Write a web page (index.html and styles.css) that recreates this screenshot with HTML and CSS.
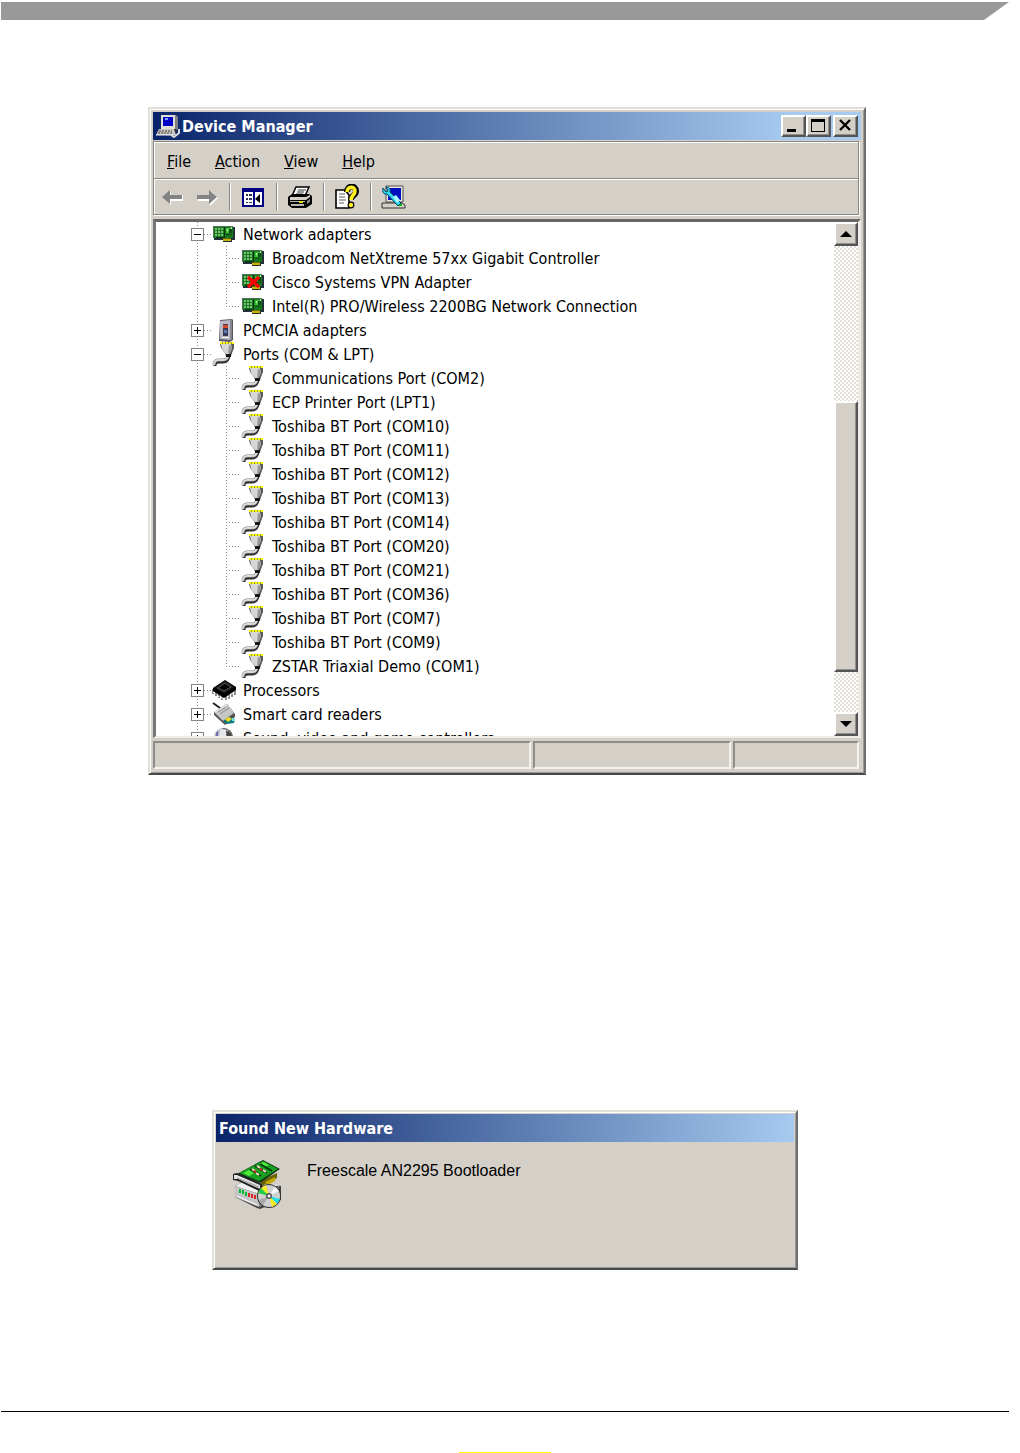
FILE: index.html
```html
<!DOCTYPE html>
<html lang="en">
<head>
  <meta charset="UTF-8" />
  <title>Device Manager</title>
  <link rel="stylesheet" href="styles.css">
</head>
<body>
  <svg class="defs" aria-hidden="true">
    <symbol id="net" viewBox="0 0 24 24">
      <path d="M2 5h21v13h-3v2h-9v-2H2z" fill="#22303c"/>
      <path d="M1 4h20v12H1z" fill="#147a1c"/>
      <path d="M1 4h20v1H1zM1 4h1v12H1z" fill="#4f6f58"/>
      <path d="M3 6h2v2H3zM6 6h2v2H6zM9 6h2v2H9zM3 9h2v2H3zM6 9h2v2H6zM9 9h2v2H9zM3 12h2v2H3zM6 12h2v2H6zM9 12h2v2H9z" fill="#7cc07c"/>
      <path d="M12 5h1v10h-1zM4 15h9v1H4z" fill="#07360c"/>
      <path d="M14 6h5v5h-5z" fill="#3fc33f"/>
      <path d="M17 7h3v4h-3zM14 12h6v1h-6z" fill="#0b4d12"/>
      <path d="M19 5h1v2h-1zM15 7h1v2h-1z" fill="#c8f0a8"/>
      <path d="M11 16h8v3h-8z" fill="#c4b400"/>
      <path d="M11 16h8v1h-8z" fill="#6f6a18"/>
    </symbol>
    <symbol id="port" viewBox="0 0 24 24">
      <path d="M17 12c0 5-2 8-6 8H7c-3 0-4 1-4 4" fill="none" stroke="#303030" stroke-width="3"/>
      <path d="M16 12c0 4-2 6-5 6H6c-3 0-4 2-4 5" fill="none" stroke="#888888" stroke-width="3"/>
      <path d="M16 12c0 4-2 6-5 6H6c-3 0-4 2-4 5" fill="none" stroke="#d8d8d8" stroke-width="2"/>
      <path d="M8 2h14v4l-2 5-1 3h-5l-1-3-4-5z" fill="#585858"/>
      <path d="M9 2h10v6l-2 4h-3l-4-5z" fill="#d6d6d6"/>
      <path d="M17 3h3v4l-2 4h-2z" fill="#9a9a9a"/>
      <path d="M14 12h5v3h-5z" fill="#181818"/>
      <path d="M8 1h14" stroke="#8c8c50" stroke-width="2"/>
      <path d="M8 1h14" stroke="#ffff00" stroke-width="2" stroke-dasharray="2 1"/>
    </symbol>
    <symbol id="pcmcia" viewBox="0 0 24 24">
      <path d="M8 2l12-1 1 1v20l-3 2-11-1z" fill="#55555f"/>
      <path d="M8 3l10-1v20l-10-1z" fill="#b9b9c6"/>
      <path d="M18 2l2-1v20l-2 2z" fill="#85858f"/>
      <path d="M11 6h5v12h-5z" fill="#363a52"/>
      <path d="M11 7h5v3h-5z" fill="#d8492c"/>
      <path d="M12 12h3v3h-3z" fill="#6078b8"/>
      <path d="M10 19h7v1h-7z" fill="#f2f2f2"/>
    </symbol>
    <symbol id="cpu" viewBox="0 0 24 24">
      <path d="M1 11v5M4 12v6M7 14v6M10 16v6M14 17v5M17 15v6M20 13v6M23 11v6" stroke="#8c8c8c" stroke-width="2"/>
      <path d="M13 2l11 7v3l-12 8-11-7v-3z" fill="#000"/>
      <path d="M13 3l9 6-10 6-9-5z" fill="#202020"/>
      <path d="M13 5l6 4-7 4-6-3z" fill="#050505" stroke="#555"/>
      <path d="M1 14l2 2M5 17l2 2M9 19l2 2M15 19l2-1M19 16l2-1" stroke="#eee"/>
    </symbol>
    <symbol id="card" viewBox="0 0 24 24">
      <path d="M1 1l7 5" stroke="#222" stroke-width="2"/>
      <path d="M2 10l13-8 8 10v3l-10 8L2 13z" fill="#555"/>
      <path d="M2 10l13-8 7 9-11 8z" fill="#c6c6c6"/>
      <path d="M6 10l8-5M8 12l9-6" stroke="#8d8d8d"/>
      <path d="M3 10l12-7" stroke="#f4f4f4"/>
      <path d="M11 19l6-4 6 2-1 4-7 1z" fill="#107c80"/>
      <path d="M13 17l4-2 3 2-4 3z" fill="#f0dc20"/>
      <path d="M20 16l3 1v2h-3z" fill="#7de4e8"/>
    </symbol>
    <symbol id="sound" viewBox="0 0 24 24">
      <circle cx="12" cy="11" r="9" fill="#666"/>
      <circle cx="10" cy="11" r="8" fill="#b8b8c6"/>
      <path d="M8 3l8 1-3 8h-6z" fill="#e6e6ec"/>
      <path d="M14 4l5 4v8h-4z" fill="#454545"/>
      <path d="M4 7l2-2v12l-2-2z" fill="#6c6cae"/>
    </symbol>
  </svg>

  <header class="page-bar"></header>

  <main>
    <section class="window device-manager">
      <div class="title-bar">
        <svg class="title-icon" viewBox="0 0 24 24" aria-hidden="true">
          <path d="M6 1h14l2 2v12l-2 1H6z" fill="#808080"/>
          <path d="M5 1h14v14H5z" fill="#e0ddd6"/>
          <path d="M7 3h10v9H7z" fill="#0000c8"/>
          <path d="M9 4h3v2H9z" fill="#7f9cff"/>
          <path d="M4 15h16l1 3H3z" fill="#303030"/>
          <path d="M3 15h15l2 6H0z" fill="#c9c6bf"/>
          <path d="M3 17h13M2 19h14" stroke="#404040" stroke-dasharray="2 1"/>
          <path d="M0 21h18" stroke="#f8f8f8"/>
          <path d="M23 15v4l-5 4-3-2" fill="none" stroke="#d8d8d8" stroke-width="2"/>
        </svg>
        <h1>Device Manager</h1>
        <div class="title-buttons">
          <button aria-label="Minimize"><svg viewBox="0 0 20 18"><path d="M4 12h9v3H4z"/></svg></button>
          <button aria-label="Maximize"><svg viewBox="0 0 20 18"><path d="M3 2h14v13H3zM4 5v9h12V5z" fill-rule="evenodd"/></svg></button>
          <button class="close" aria-label="Close"><svg viewBox="0 0 20 18"><path d="M5 3l10 10M15 3L5 13" fill="none" stroke="#000" stroke-width="2.4"/></svg></button>
        </div>
      </div>

      <div class="bars">
        <nav class="menu-bar">
          <button><u>F</u>ile</button>
          <button><u>A</u>ction</button>
          <button><u>V</u>iew</button>
          <button><u>H</u>elp</button>
        </nav>
        <div class="toolbar">
          <button aria-label="Back"><svg viewBox="0 0 26 26"><path d="M5 14l7-7v4h12v6H12v4z" fill="#fff"/><path d="M3 13l8-7v5h12v4H11v5z" fill="#848484"/></svg></button>
          <button aria-label="Forward"><svg viewBox="0 0 26 26"><path d="M25 14l-7-7v4H5v6h12v5z" fill="#fff"/><path d="M24 13l-8-7v5H4v4h12v5z" fill="#848484"/></svg></button>
          <span class="sep"></span>
          <button aria-label="Show/Hide Console Tree">
            <svg viewBox="0 0 26 26">
              <path d="M2 4h22v19H2z" fill="#000080"/>
              <path d="M4 8h9v13H4zM15 8h7v13h-7z" fill="#fff"/>
              <path d="M6 10h2v2H6zM6 14h2v2H6zM6 18h2v1H6zM9 10h3v2H9zM9 14h3v2H9zM9 18h3v1H9z" fill="#303060"/>
              <path d="M20 10v9l-5-4z" fill="#000"/>
            </svg>
          </button>
          <span class="sep"></span>
          <button aria-label="Print">
            <svg viewBox="0 0 26 26">
              <path d="M9 3h13l-4 9H5z" fill="#fff" stroke="#000" stroke-width="1.5"/>
              <path d="M11 6h8M10 8h7M9 10h7" stroke="#333"/>
              <path d="M1 13l4-3h17l3 2v8l-6 4H5l-4-3z" fill="#000"/>
              <path d="M3 13h16l4-2v2l-4 3H3z" fill="#d4d0c8"/>
              <path d="M3 17h15v1H3zM4 20h13v2H4z" fill="#b8b4ac"/>
              <path d="M20 17l3-2v3l-3 2z" fill="#8a8a8a"/>
              <path d="M12 17h4v2h-4z" fill="#e8e000"/>
            </svg>
          </button>
          <span class="sep"></span>
          <button aria-label="Help">
            <svg viewBox="0 0 26 26">
              <path d="M2 6h9l4 5v13H2z" fill="#fff" stroke="#000" stroke-width="1.6"/>
              <path d="M5 10h6M5 13h6M5 16h7M5 19h5" stroke="#606060"/>
              <path d="M13 8c0-7 9-7 9-1 0 5-5 4-5 9" fill="none" stroke="#000" stroke-width="6"/>
              <path d="M13 8c0-6 8-6 8-1 0 4-4 4-4 9" fill="none" stroke="#ffee20" stroke-width="3.6"/>
              <circle cx="17" cy="21" r="3.4" fill="#000"/>
              <circle cx="17" cy="21" r="2.2" fill="#ffee20"/>
            </svg>
          </button>
          <span class="sep"></span>
          <button aria-label="Scan for hardware changes">
            <svg viewBox="0 0 26 26">
              <path d="M5 2h17v16H5z" fill="#e8e6e0" stroke="#505050"/>
              <path d="M7 4h13v12H7z" fill="#0010c0"/>
              <path d="M1 19h20l3 2v3H1z" fill="#d4d0c8" stroke="#303030"/>
              <path d="M17 20h4v2h-4z" fill="#00c000"/>
              <path d="M2 4c-1 4 1 7 4 6l11 12 3-3L9 8c1-3-1-5-4-5l2 4-2 1z" fill="#30d8f0" stroke="#004060"/>
              <path d="M12 13l3-2 4 5-3 3z" fill="#a8f8ff"/>
            </svg>
          </button>
        </div>
      </div>

      <div class="view">
        <ul class="tree">
          <li>
            <div class="row"><button class="box minus" aria-label="Collapse"></button><i class="dots"></i><svg class="icon"><use href="#net"/></svg><span>Network adapters</span></div>
            <ul>
              <li class="row"><i class="dots"></i><svg class="icon"><use href="#net"/></svg><span>Broadcom NetXtreme 57xx Gigabit Controller</span></li>
              <li class="row"><i class="dots"></i><svg class="icon" viewBox="0 0 24 24"><use href="#net"/><path d="M7 7l11 10M18 7L7 17" stroke="#f00" stroke-width="3.4"/></svg><span>Cisco Systems VPN Adapter</span></li>
              <li class="row"><i class="dots"></i><svg class="icon"><use href="#net"/></svg><span>Intel(R) PRO/Wireless 2200BG Network Connection</span></li>
            </ul>
          </li>
          <li>
            <div class="row"><button class="box plus" aria-label="Expand"></button><i class="dots"></i><svg class="icon"><use href="#pcmcia"/></svg><span>PCMCIA adapters</span></div>
          </li>
          <li>
            <div class="row"><button class="box minus" aria-label="Collapse"></button><i class="dots"></i><svg class="icon"><use href="#port"/></svg><span>Ports (COM &amp; LPT)</span></div>
            <ul>
              <li class="row"><i class="dots"></i><svg class="icon"><use href="#port"/></svg><span>Communications Port (COM2)</span></li>
              <li class="row"><i class="dots"></i><svg class="icon"><use href="#port"/></svg><span>ECP Printer Port (LPT1)</span></li>
              <li class="row"><i class="dots"></i><svg class="icon"><use href="#port"/></svg><span>Toshiba BT Port (COM10)</span></li>
              <li class="row"><i class="dots"></i><svg class="icon"><use href="#port"/></svg><span>Toshiba BT Port (COM11)</span></li>
              <li class="row"><i class="dots"></i><svg class="icon"><use href="#port"/></svg><span>Toshiba BT Port (COM12)</span></li>
              <li class="row"><i class="dots"></i><svg class="icon"><use href="#port"/></svg><span>Toshiba BT Port (COM13)</span></li>
              <li class="row"><i class="dots"></i><svg class="icon"><use href="#port"/></svg><span>Toshiba BT Port (COM14)</span></li>
              <li class="row"><i class="dots"></i><svg class="icon"><use href="#port"/></svg><span>Toshiba BT Port (COM20)</span></li>
              <li class="row"><i class="dots"></i><svg class="icon"><use href="#port"/></svg><span>Toshiba BT Port (COM21)</span></li>
              <li class="row"><i class="dots"></i><svg class="icon"><use href="#port"/></svg><span>Toshiba BT Port (COM36)</span></li>
              <li class="row"><i class="dots"></i><svg class="icon"><use href="#port"/></svg><span>Toshiba BT Port (COM7)</span></li>
              <li class="row"><i class="dots"></i><svg class="icon"><use href="#port"/></svg><span>Toshiba BT Port (COM9)</span></li>
              <li class="row"><i class="dots"></i><svg class="icon"><use href="#port"/></svg><span>ZSTAR Triaxial Demo (COM1)</span></li>
            </ul>
          </li>
          <li>
            <div class="row"><button class="box plus" aria-label="Expand"></button><i class="dots"></i><svg class="icon"><use href="#cpu"/></svg><span>Processors</span></div>
          </li>
          <li>
            <div class="row"><button class="box plus" aria-label="Expand"></button><i class="dots"></i><svg class="icon"><use href="#card"/></svg><span>Smart card readers</span></div>
          </li>
          <li>
            <div class="row"><button class="box plus" aria-label="Expand"></button><i class="dots"></i><svg class="icon"><use href="#sound"/></svg><span>Sound, video and game controllers</span></div>
          </li>
        </ul>
        <div class="scrollbar">
          <button aria-label="Scroll up"><svg viewBox="0 0 12 6"><path d="M6 0l6 6H0z"/></svg></button>
          <div class="track-above"></div>
          <div class="thumb"></div>
          <div class="track-below"></div>
          <button aria-label="Scroll down"><svg viewBox="0 0 12 6"><path d="M0 0h12L6 6z"/></svg></button>
        </div>
      </div>

      <div class="status-bar">
        <div class="wide"></div>
        <div class="mid"></div>
        <div class="narrow"></div>
      </div>
    </section>

    <section class="window hardware">
      <div class="title-bar">
        <h2>Found New Hardware</h2>
      </div>
      <div class="message">
        <svg class="hardware-icon" viewBox="0 0 50 50" aria-hidden="true">
          <path d="M3 27l8-4 38 4v14l-21 9-3-1-22-11z" fill="#404040"/>
          <path d="M3 27l8-4 36 3-20 9z" fill="#f0f0f0"/>
          <path d="M3 27l24 8v13L3 38z" fill="#c4c4c4"/>
          <path d="M27 35l20-8v13l-20 8z" fill="#8c8c8c"/>
          <path d="M8 30v4M11 31v4M14 33v4" stroke="#00c030" stroke-width="2"/>
          <path d="M17 34v4M20 35v4M23 36v4" stroke="#e02020" stroke-width="2"/>
          <path d="M5 37l20 9" stroke="#fff"/>
          <path d="M28 22l17-8v5l-15 8z" fill="#6a6200"/>
          <path d="M33 23l10-5v4l-8 4z" fill="#c0a800"/>
          <path d="M5 15L31 1l17 9-20 14z" fill="#103818"/>
          <path d="M7 14L31 2l15 8-19 12z" fill="#18a020"/>
          <path d="M11 14l6-3 5 3-5 3zM27 5l5-2 5 3-4 2z" fill="#50e838"/>
          <path d="M18 10l11 7M23 7l12 7M28 5l12 7" stroke="#083c10" stroke-width="2"/>
          <path d="M20 10l3 2M25 7l3 2M24 14l3 2M31 11l3 2" stroke="#f8d8c8" stroke-width="2"/>
          <path d="M22 12l2 1M28 10l2 1" stroke="#e02828" stroke-width="2"/>
          <path d="M1 15l4-1 25 11v5l-3 2L6 22l-5-1z" fill="#202020"/>
          <path d="M2 16h3l23 10v4L6 20H2z" fill="#e4e4e4"/>
          <path d="M5 19l22 9" stroke="#909090"/>
          <circle cx="37" cy="37" r="12" fill="#303030"/>
          <circle cx="37" cy="37" r="11" fill="#d0d0d0"/>
          <path d="M37 37l-8-8 5-3z" fill="#f8f020"/>
          <path d="M37 37l-11-3 3-5z" fill="#20d040"/>
          <path d="M37 37l11 3-3 5z" fill="#20e0e8"/>
          <path d="M37 37l8 8-5 3z" fill="#f8e820"/>
          <path d="M37 37l6-9 4 4z" fill="#f8f8f8"/>
          <path d="M37 37l-6 9-4-5z" fill="#a8a8a8"/>
          <circle cx="37" cy="37" r="3" fill="#505050"/>
          <circle cx="37" cy="37" r="1.5" fill="#fff"/>
        </svg>
        <p>Freescale AN2295 Bootloader</p>
      </div>
    </section>
  </main>

  <footer>
    <div class="highlight"></div>
  </footer>
</body>
</html>
```
FILE: styles.css
```css
* {
  box-sizing: border-box;
}
body {
  margin: 0;
  padding: 2px 11px 0 1px;
  background: white;
  color: black;
  font-family: 'DejaVu Sans Condensed', 'DejaVu Sans', sans-serif;
  font-size: 16px;
}
.defs {
  display: none;
}
h1, h2, p, ul {
  margin: 0;
  padding: 0;
}
button {
  margin: 0;
  padding: 0;
  border: none;
  background: none;
  color: inherit;
  font: inherit;
}
svg {
  display: block;
}
.page-bar {
  height: 18px;
  background: #999999;
  clip-path: polygon(0 0, 100% 0, calc(100% - 25px) 100%, 0 100%);
}
main {
  display: flex;
  flex-direction: column;
  align-items: center;
  padding: 87px 0 141px;
  gap: 335px;
}

/* windows */
.window {
  width: 100%;
  background: #d4d0c8;
  border: 2px solid;
  border-color: #e2dfd6 #6e6e6e #484a4a #e2dfd6;
  box-shadow: inset 1px 1px #ffffff, inset -1px -1px #999996;
}
.device-manager {
  max-width: 718px;
  margin-left: 4px;
  padding: 3px;
}
.title-bar {
  display: flex;
  align-items: center;
  height: 28px;
  padding: 0 3px;
  background: linear-gradient(to right, #0a246a, #a6caf0 90%);
  color: white;
}
.title-bar h1, .title-bar h2 {
  padding-top: 2px;
  font-size: 16px;
  line-height: 24px;
  font-weight: bold;
}
.title-icon {
  width: 24px;
  height: 24px;
  margin-right: 2px;
}
.title-buttons {
  display: flex;
  margin-left: auto;
}
.title-buttons button, .scrollbar button, .thumb {
  background: #d4d0c8;
  border: 2px solid;
  border-color: #ffffff #555555 #555555 #ffffff;
  box-shadow: inset -1px -1px #909090;
}
.title-buttons button {
  width: 25px;
  height: 22px;
}
.title-buttons svg {
  width: 20px;
  height: 18px;
}
.title-buttons .close {
  margin-left: 2px;
}

/* menu and toolbar */
.bars {
  margin: 1px 2px 0 0;
  border: 1px solid #868686;
  box-shadow: inset 1px 1px #ffffff, 1px 1px #ffffff;
}
.menu-bar {
  display: flex;
  align-items: center;
  gap: 24px;
  height: 36px;
  padding: 2px 13px 0;
}
.toolbar {
  display: flex;
  align-items: center;
  height: 36px;
  padding: 0 1px;
  border-top: 1px solid #868686;
  box-shadow: inset 0 1px #ffffff;
}
.toolbar button {
  width: 34px;
  height: 34px;
}
.toolbar svg {
  width: 26px;
  height: 26px;
  margin: 0 auto;
}
.sep {
  width: 2px;
  height: 28px;
  margin: 0 5px 0 6px;
  background: linear-gradient(to right, #868686 50%, #ffffff 50%);
}

/* device tree */
.view {
  display: flex;
  height: 519px;
  margin-top: 4px;
  background: white;
  border: 3px solid;
  border-width: 3px 3px 2px;
  border-color: #666666 #eeece6 #eeece6 #777777;
}
.tree {
  flex: 1;
  overflow: hidden;
  list-style: none;
  background: repeating-linear-gradient(#888888 0 1px, transparent 1px 3px) 41px 0 / 1px 100% no-repeat;
}
.tree ul {
  list-style: none;
}
.row {
  display: flex;
  align-items: center;
  height: 24px;
  padding-left: 35px;
  line-height: 24px;
  white-space: nowrap;
}
.row span {
  padding-top: 2px;
}
.tree ul .row {
  padding-left: 70px;
  background: repeating-linear-gradient(#888888 0 1px, transparent 1px 3px) 70px 0 / 1px 24px no-repeat;
}
.tree ul .row:last-child {
  background-size: 1px 12px;
}
.box {
  width: 13px;
  height: 13px;
  border: 1px solid #848484;
  background: linear-gradient(#000, #000) center / 7px 1px no-repeat, white;
}
.plus {
  background: linear-gradient(#000, #000) center / 7px 1px no-repeat, linear-gradient(#000, #000) center / 1px 7px no-repeat, white;
}
.dots {
  width: 8px;
  height: 1px;
  background: repeating-linear-gradient(to right, #888888 0 1px, transparent 1px 3px);
}
.tree ul .dots {
  width: 15px;
}
.icon {
  width: 24px;
  height: 24px;
  margin-right: 7px;
}
.scrollbar {
  display: flex;
  flex-direction: column;
  width: 24px;
  background: repeating-conic-gradient(#ffffff 0 25%, #e2dfd9 0 50%) 0 0 / 4px 4px;
}
.scrollbar button {
  height: 24px;
}
.scrollbar svg {
  width: 12px;
  height: 6px;
  margin: 0 auto;
}
.track-above {
  flex: 155;
}
.thumb {
  flex: 267;
}
.track-below {
  flex: 40;
}

.status-bar {
  display: flex;
  gap: 2px;
  margin: 3px 2px 1px 0;
}
.status-bar div {
  height: 28px;
  border: 2px solid;
  border-color: #8c8c8c #f4f2ee #f4f2ee #8c8c8c;
}
.wide {
  flex: 374;
}
.mid {
  flex: 194;
}
.narrow {
  flex: 122;
}

/* found new hardware */
.hardware {
  max-width: 586px;
  padding: 2px 2px 4px;
}
.hardware .title-bar {
  background: linear-gradient(to right, #0a246a, #a6caf0);
}
.message {
  display: flex;
  gap: 25px;
  padding: 17px 16px 55px;
  font-family: 'Liberation Sans', sans-serif;
  line-height: 24px;
}
.hardware-icon {
  width: 50px;
  height: 50px;
}

footer {
  border-top: 1px solid black;
  padding-top: 40px;
}
.highlight {
  width: 92px;
  height: 1px;
  margin: 0 auto;
  background: #ffff00;
}
```
